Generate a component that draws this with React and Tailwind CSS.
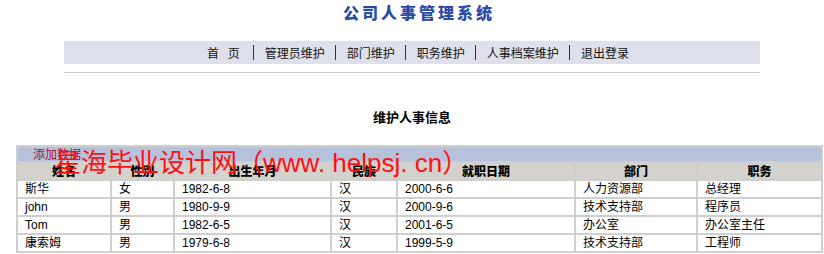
const navItems = ['首 页', '管理员维护', '部门维护', '职务维护', '人事档案维护', '退出登录'];

const columns = [
  { label: '姓名', w: 'w-[92px]' },
  { label: '性别', w: 'w-[61px]' },
  { label: '出生年月', w: 'w-[155px]' },
  { label: '民族', w: 'w-[64px]' },
  { label: '就职日期', w: 'w-[176px]' },
  { label: '部门', w: 'w-[120px]' },
  { label: '职务', w: 'w-[123px]' },
];

const rows = [
  ['斯华', '女', '1982-6-8', '汉', '2000-6-6', '人力资源部', '总经理'],
  ['john', '男', '1980-9-9', '汉', '2000-9-6', '技术支持部', '程序员'],
  ['Tom', '男', '1982-6-5', '汉', '2001-6-5', '办公室', '办公室主任'],
  ['康索姆', '男', '1979-6-8', '汉', '1999-5-9', '技术支持部', '工程师'],
];

const font = "font-['Liberation_Sans','Noto_Sans_CJK_SC',sans-serif]";

export default function App() {
  return (
    <div className={`relative w-[824px] h-[254px] overflow-hidden bg-white text-black ${font}`}>
      <h1 className="pt-[3px] pl-[14px] h-[41px] text-center text-[16px] leading-[18px] font-black tracking-[3px] text-[#2a4aa8] font-['Noto_Sans_CJK_SC',sans-serif]">
        公司人事管理系统
      </h1>

      <nav className="mx-[64px] h-[23px] bg-[#dee1ec] flex items-center justify-center pl-[12px] text-[12px] text-[#111] font-['Noto_Sans_CJK_SC',sans-serif]">
        {navItems.map((item, i) => (
          <div key={item} className="flex items-center">
            {i > 0 && <span className="ml-[10px] mr-[11px] h-[15px] border-l border-[#5a1c3c]" />}
            <span className={i === 0 ? 'tracking-[3px]' : ''}>{item}</span>
          </div>
        ))}
      </nav>
      <div className="mx-[64px] mt-[8px] border-t border-[#c8c8c8]" />

      <div className="mt-[36px] text-center text-[13px] font-bold leading-[16px] font-['Noto_Sans_CJK_SC',sans-serif]">
        维护人事信息
      </div>

      <table className="ml-[16px] mt-[20px] w-[807px] table-fixed border-separate border-spacing-[2px] bg-[#cfcfcf] text-[12px] leading-[16px]">
        <colgroup>
          {columns.map((c) => (
            <col key={c.label} className={c.w} />
          ))}
        </colgroup>
        <thead>
          <tr>
            <td colSpan={7} className="h-[14px] bg-[#b6c2dc] pl-[15px] text-[#a3132a] leading-[14px] font-['Noto_Sans_CJK_SC',sans-serif]">
              添加数据
            </td>
          </tr>
          <tr>
            {columns.map((c) => (
              <th key={c.label} className="h-[16px] bg-[#d4d2cd] text-center font-black font-['Noto_Sans_CJK_SC',sans-serif]">
                {c.label}
              </th>
            ))}
          </tr>
        </thead>
        <tbody>
          {rows.map((r) => (
            <tr key={r[0]}>
              {r.map((v, i) => (
                <td key={i} className="h-[16px] bg-white pl-[7px] whitespace-nowrap">
                  {v}
                </td>
              ))}
            </tr>
          ))}
        </tbody>
      </table>

      <div className="absolute left-[55px] top-[146px] text-[26px] leading-[34px] text-[#ff1010] whitespace-nowrap pointer-events-none font-['Liberation_Sans','Noto_Sans_CJK_SC',sans-serif]">
        星海毕业设计网（www. helpsj. cn）
      </div>
    </div>
  );
}
